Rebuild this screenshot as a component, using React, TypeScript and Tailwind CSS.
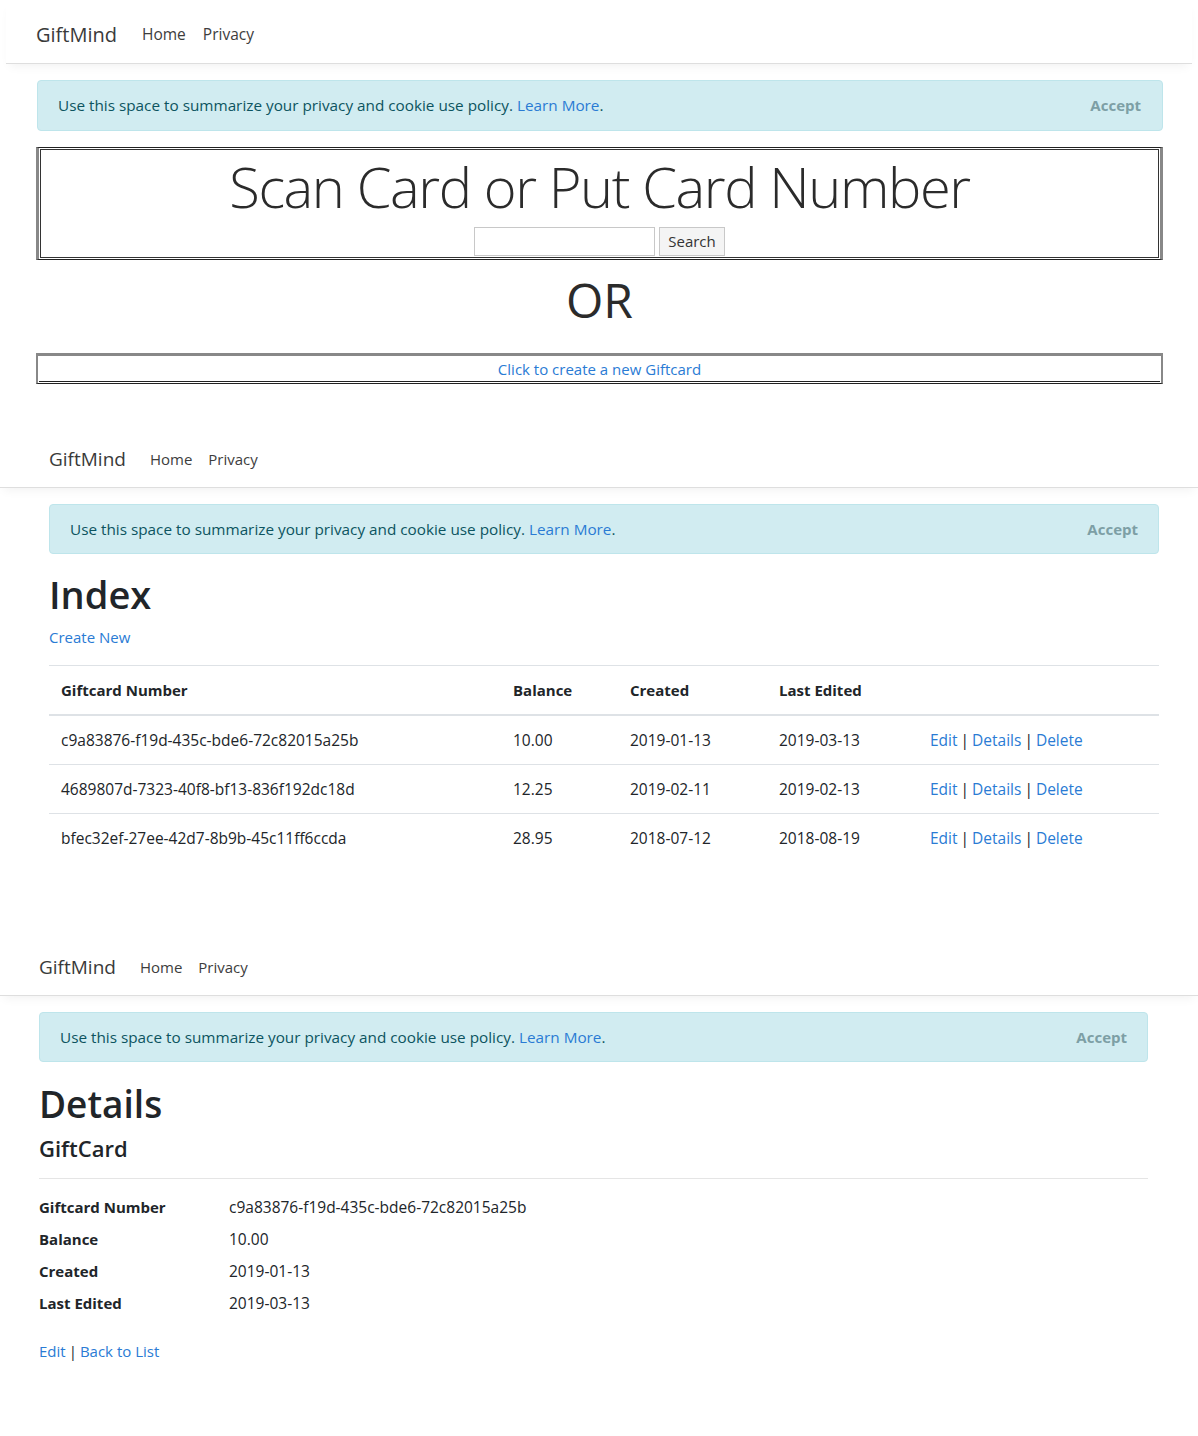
const font = "font-['Segoe_UI','Open_Sans',sans-serif]";

const cards = [
  { number: "c9a83876-f19d-435c-bde6-72c82015a25b", balance: "10.00", created: "2019-01-13", edited: "2019-03-13" },
  { number: "4689807d-7323-40f8-bf13-836f192dc18d", balance: "12.25", created: "2019-02-11", edited: "2019-02-13" },
  { number: "bfec32ef-27ee-42d7-8b9b-45c11ff6ccda", balance: "28.95", created: "2018-07-12", edited: "2018-08-19" },
];

const Navbar = ({ pad, big = false, className = "" }: { pad: string; big?: boolean; className?: string }) => (
  <nav className={`flex items-center border-b border-[#dedede] shadow-[0_6px_10px_-4px_rgba(0,0,0,0.06)] ${className}`}>
    <div className={`flex items-center ${pad}`}>
      <span className={`${big ? "text-[20px] mr-[25px]" : "text-[19px] mr-[24px]"} text-[#3a3a3a]`}>GiftMind</span>
      <span className={`${big ? "text-[15.5px] mr-[17px]" : "text-[15px] mr-[16px]"} text-[#3d3d3d]`}>Home</span>
      <span className={`${big ? "text-[15.5px]" : "text-[15px]"} text-[#3d3d3d]`}>Privacy</span>
    </div>
  </nav>
);

const Cookie = ({ className = "" }: { className?: string }) => (
  <div className={`flex items-center justify-between rounded bg-[#d1ecf1] border border-[#bee5eb] text-[#0c5460] text-[15.3px] ${className}`}>
    <span>
      Use this space to summarize your privacy and cookie use policy.{" "}
      <a className="text-[#2a7bd4]">Learn More</a>.
    </span>
    <span className="font-bold text-[#7d9fa5] text-[15px]">Accept</span>
  </div>
);

const Sep = () => <span className="text-[#212529] mx-[3px]">|</span>;

export default function App() {
  return (
    <div className={`${font} bg-white text-[#212529] min-h-screen`}>
      {/* search page */}
      <section className="px-[6px]">
        <Navbar pad="pl-[30px] pt-[6px]" big className="h-[64px]" />
      </section>
      <div className="pl-[36px] pr-[35px]">
        <Cookie className="ml-px mt-[16px] h-[51px] pl-[20px] pr-[21px]" />
        <div className="mt-[16px] border border-[#222] border-l-[3px] border-r-[3px] border-l-[#888] border-r-[#888] p-px">
          <div className="border border-[#333] flex flex-col items-center">
            <h1 className="text-[56px] font-light leading-none mt-[8px] text-[#2b2b2b] tracking-[-1.4px]">
              Scan Card or Put Card Number
            </h1>
            <div className="flex items-center gap-[4px] mt-[13px] mb-px">
              <input className="w-[181px] h-[29px] border border-[#c8c8c8] bg-white" />
              <button className="h-[29px] px-[8px] border border-[#c8c8c8] bg-[#f4f4f4] text-[15px] text-[#333]">
                Search
              </button>
            </div>
          </div>
        </div>
        <div className="h-[93px] flex items-center justify-center pb-[14px]">
          <span className="text-[48px] text-[#2b2b2b] leading-none">OR</span>
        </div>
        <div className="border-t-[3px] border-t-[#888] border-x-[2px] border-x-[#888] border-b border-b-[#222] p-px">
          <div className="border-b border-[#222] h-[25px] flex items-center justify-center">
            <a className="text-[15px] text-[#2a7bd4]">Click to create a new Giftcard</a>
          </div>
        </div>
      </div>

      {/* index page */}
      <Navbar pad="pl-[49px]" className="h-[57px] mt-[47px]" />
      <div className="pl-[49px] pr-[39px]">
        <Cookie className="mt-[16px] h-[50px] pl-[20px] pr-[20px]" />
        <h1 className="text-[38px] font-semibold leading-none mt-[21px]">Index</h1>
        <a className="block text-[15px] text-[#2a7bd4] mt-[13px]">Create New</a>
        <table className="w-full mt-[16px] border-t border-[#dee2e6] text-[15.5px]">
          <thead>
            <tr className="border-b-2 border-[#dee2e6] h-[50px] text-left text-[15px]">
              <th className="pl-[12px] font-bold w-[452px]">Giftcard Number</th>
              <th className="pl-[12px] font-bold w-[117px]">Balance</th>
              <th className="pl-[12px] font-bold w-[149px]">Created</th>
              <th className="pl-[12px] font-bold w-[151px]">Last Edited</th>
              <th></th>
            </tr>
          </thead>
          <tbody>
            {cards.map((c, i) => (
              <tr key={c.number} className={`h-[49px] ${i < cards.length - 1 ? "border-b border-[#dee2e6]" : ""}`}>
                <td className="pl-[12px] pt-[2px]">{c.number}</td>
                <td className="pl-[12px] pt-[2px]">{c.balance}</td>
                <td className="pl-[12px] pt-[2px]">{c.created}</td>
                <td className="pl-[12px] pt-[2px]">{c.edited}</td>
                <td className="pl-[12px] pt-[2px]">
                  <a className="text-[#2a7bd4]">Edit</a>
                  <Sep />
                  <a className="text-[#2a7bd4]">Details</a>
                  <Sep />
                  <a className="text-[#2a7bd4]">Delete</a>
                </td>
              </tr>
            ))}
          </tbody>
        </table>
      </div>

      {/* details page */}
      <Navbar pad="pl-[39px]" className="h-[57px] mt-[77px]" />
      <div className="pl-[39px] pr-[50px]">
        <Cookie className="mt-[16px] h-[50px] pl-[20px] pr-[20px]" />
        <h1 className="text-[37px] font-semibold leading-none mt-[23px]">Details</h1>
        <h4 className="text-[22px] font-semibold leading-none mt-[15px]">GiftCard</h4>
        <hr className="mt-[19px] border-[#e5e5e5]" />
        <dl className="mt-[18px] grid grid-cols-[190px_1fr] gap-y-[11px] text-[15.5px] leading-[21px]">
          <dt className="font-bold text-[15px]">Giftcard Number</dt>
          <dd>c9a83876-f19d-435c-bde6-72c82015a25b</dd>
          <dt className="font-bold text-[15px]">Balance</dt>
          <dd>10.00</dd>
          <dt className="font-bold text-[15px]">Created</dt>
          <dd>2019-01-13</dd>
          <dt className="font-bold text-[15px]">Last Edited</dt>
          <dd>2019-03-13</dd>
        </dl>
        <div className="mt-[26px] text-[15px]">
          <a className="text-[#2a7bd4]">Edit</a>
          <Sep />
          <a className="text-[#2a7bd4]">Back to List</a>
        </div>
      </div>
    </div>
  );
}
